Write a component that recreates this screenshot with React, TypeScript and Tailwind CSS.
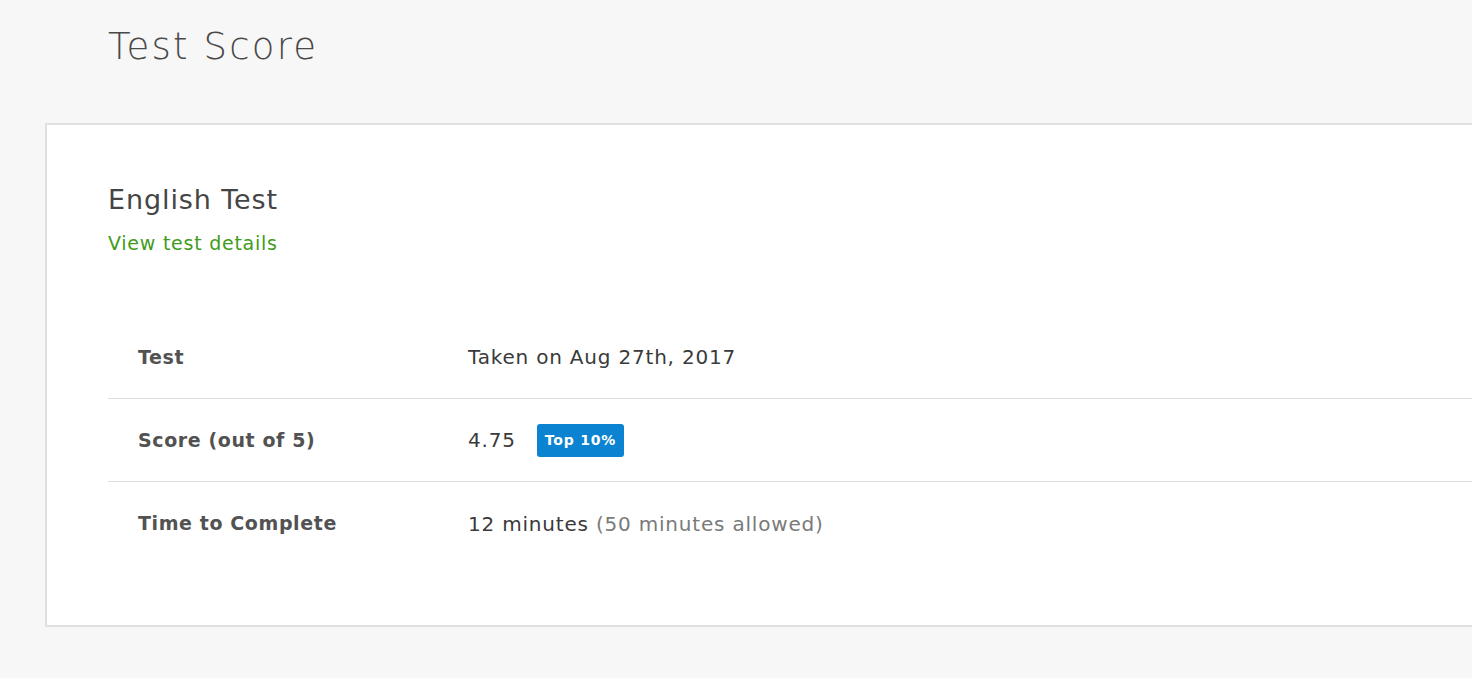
export default function App() {
  const rows = [
    { label: "Test", value: <span>Taken on Aug 27th, 2017</span> },
    {
      label: "Score (out of 5)",
      value: (
        <span className="flex items-center">
          <span>4.75</span>
          <span className="ml-[21px] rounded-[3px] bg-[#0b83d0] px-[8px] py-[6px] text-[14px] font-bold leading-[21px] text-white">
            Top 10%
          </span>
        </span>
      ),
    },
    {
      label: "Time to Complete",
      value: (
        <span>
          12 minutes <span className="text-[#7a7a7a]">(50 minutes allowed)</span>
        </span>
      ),
    },
  ];

  return (
    <div className="min-h-screen w-full overflow-hidden bg-[#f7f7f7] font-['DejaVu_Sans',sans-serif] text-[#3d3d3d]">
      <h1 className="pl-[108px] pt-[22px] text-[37px] font-extralight leading-[50px] tracking-[2.2px] text-[#494949]">
        Test Score
      </h1>

      <div className="ml-[45px] mt-[51px] w-[1500px] border-2 border-[#e0e0e0] bg-white pl-[61px] pt-[57px] pb-[60px]">
        <h2 className="text-[27px] leading-[36px] tracking-[0.9px] text-[#454545]">English Test</h2>
        <a className="mt-[12px] block text-[19px] leading-[26px] tracking-[0.75px] text-[#3f9c1b]">View test details</a>

        <div className="mt-[60px]">
          {rows.map((r, i) => (
            <div
              key={r.label}
              className={`flex h-[83px] items-center ${i < rows.length - 1 ? "border-b border-[#dedede]" : ""}`}
            >
              <div className="w-[360px] pl-[30px] text-[19px] font-bold tracking-[0.6px] text-[#525252]">{r.label}</div>
              <div className="text-[20px] tracking-[0.8px] text-[#3a3a3a]">{r.value}</div>
            </div>
          ))}
        </div>
      </div>
    </div>
  );
}
